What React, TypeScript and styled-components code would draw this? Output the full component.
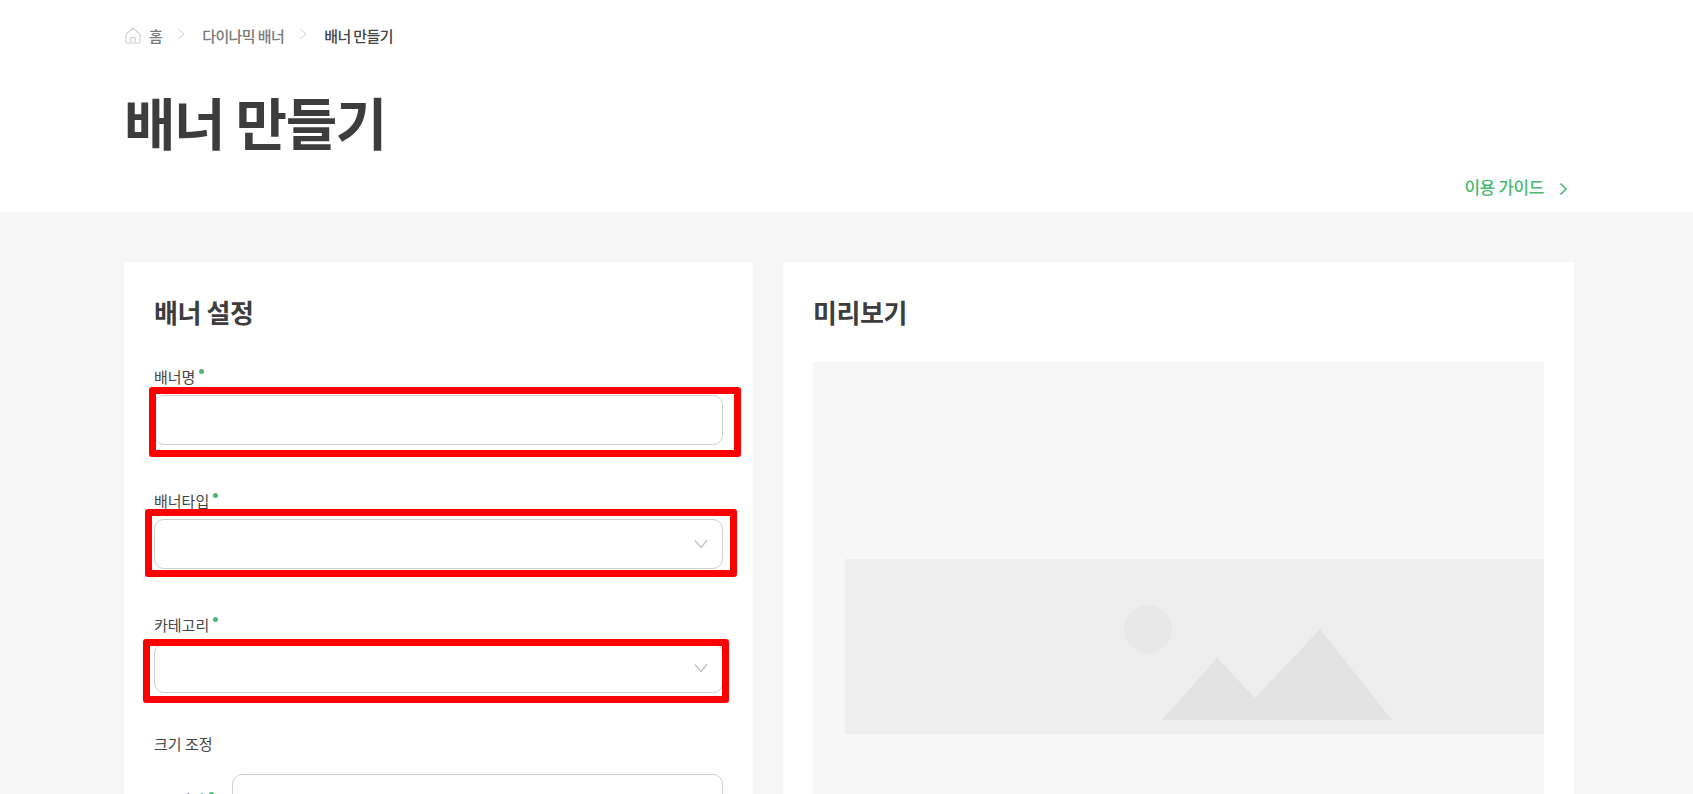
import React, { FC } from "react";
import styled, { createGlobalStyle } from "styled-components";

const colors = {
  page: "#f6f6f6",
  title: "#3d3d3d",
  text: "#444444",
  muted: "#7a7a7a",
  line: "#d2d2d2",
  inputLine: "#cfcfcf",
  green: "#4ab873",
  chevron: "#c0c0c0",
  red: "#ff0000"
};

const GlobalStyle = createGlobalStyle`
  html, body {
    margin: 0;
    padding: 0;
    background: ${colors.page};
    font-family: "Noto Sans CJK KR", "Noto Sans", sans-serif;
  }
  * {
    box-sizing: border-box;
  }
`;

const Page = styled.div`
  height: 100vh;
  overflow: hidden;
  background: ${colors.page};
`;

const Header = styled.header`
  height: 212px;
  padding: 23px 125px 0;
  background: #fff;
`;

const Breadcrumb = styled.nav`
  display: flex;
  align-items: center;
  height: 24px;
  font-size: 15px;
  font-weight: 500;
  letter-spacing: -0.6px;
  color: ${colors.muted};
`;

const Crumb = styled.span<{ $active?: boolean }>`
  color: ${p => (p.$active ? colors.text : colors.muted)};
`;

const CrumbSeparator = styled.svg`
  width: 8px;
  height: 12px;
  margin: -2px 17px 0 15px;
`;

const HomeIcon = styled.svg`
  width: 16px;
  height: 17px;
  margin-right: 8px;
`;

const Title = styled.h1`
  margin: 39px 0 0 -1px;
  font-size: 56px;
  line-height: 70px;
  font-weight: 700;
  letter-spacing: -1.4px;
  color: ${colors.title};
`;

const GuideRow = styled.div`
  display: flex;
  justify-content: flex-end;
  align-items: center;
  margin-top: 18px;
`;

const GuideLink = styled.a`
  display: flex;
  align-items: center;
  font-size: 17px;
  font-weight: 500;
  letter-spacing: -0.4px;
  line-height: 26px;
  color: ${colors.green};
`;

const GuideChevron = styled.svg`
  width: 9px;
  height: 14px;
  margin: 4px 0 0 15px;
`;

const Columns = styled.main`
  display: grid;
  grid-template-columns: 629px 791px;
  gap: 30px;
  padding: 50px 119px 0 124px;
`;

const Card = styled.section`
  padding: 31px 30px 40px;
  background: #fff;
`;

const CardTitle = styled.h2`
  margin: 0 0 35px;
  font-size: 26px;
  line-height: 38px;
  font-weight: 700;
  letter-spacing: -0.4px;
  color: ${colors.title};
`;

const Field = styled.div`
  position: relative;
  margin-bottom: 45px;
`;

const Label = styled.label`
  display: block;
  margin-bottom: 7px;
  font-size: 15px;
  font-weight: 400;
  line-height: 22px;
  color: ${colors.text};
`;

const Required = styled.span`
  display: inline-block;
  width: 5px;
  height: 5px;
  margin-left: 4px;
  border-radius: 50%;
  background: ${colors.green};
  vertical-align: 9px;
`;

const TextInput = styled.input`
  display: block;
  width: 100%;
  height: 50px;
  padding: 0 16px;
  border: 1px solid ${colors.inputLine};
  border-radius: 10px;
  background: #fff;
  outline: none;
`;

const SelectBox = styled.div`
  display: flex;
  align-items: center;
  justify-content: flex-end;
  width: 100%;
  height: 50px;
  padding-right: 14px;
  border: 1px solid ${colors.inputLine};
  border-radius: 10px;
  background: #fff;
`;

const SelectChevron = styled.svg`
  width: 14px;
  height: 10px;
`;

// red annotation frames drawn over the inputs in the screenshot
const Highlight = styled.div<{ $left: number; $top: number; $width: number; $height: number }>`
  position: absolute;
  left: ${p => p.$left}px;
  top: ${p => p.$top}px;
  width: ${p => p.$width}px;
  height: ${p => p.$height}px;
  border: 7px solid ${colors.red};
  border-radius: 3px;
  pointer-events: none;
`;

const SectionLabel = styled(Label)`
  margin-top: -5px;
  margin-bottom: 19px;
`;

const SizeRow = styled.div`
  display: flex;
  align-items: center;
`;

const SizeLabel = styled.label`
  flex: 0 0 78px;
  padding-left: 23px;
  padding-top: 1px;
  font-size: 15px;
  line-height: 22px;
  color: ${colors.text};
`;

const Preview = styled.div`
  height: 600px;
  margin-top: -4px;
  padding: 197px 0 0 32px;
  overflow: hidden;
  background: #f7f7f7;
`;

const PreviewBanner = styled.div`
  display: flex;
  justify-content: center;
  align-items: flex-start;
  width: 825px;
  height: 175px;
  padding-top: 46px;
  background: #eeeeee;
`;

const PlaceholderArt = styled.svg`
  width: 268px;
  height: 115px;
`;

const Chevron: FC = () => (
  <CrumbSeparator viewBox="0 0 8 12">
    <path d="M1 1l6 5-6 5" fill="none" stroke={colors.line} strokeWidth="1" />
  </CrumbSeparator>
);

const Select: FC = () => (
  <SelectBox>
    <SelectChevron viewBox="0 0 14 10">
      <path d="M1 1.5l6 7 6-7" fill="none" stroke={colors.chevron} strokeWidth="1.2" />
    </SelectChevron>
  </SelectBox>
);

const App: FC = () => {
  return (
    <Page>
      <GlobalStyle />
      <Header>
        <Breadcrumb>
          <HomeIcon viewBox="0 0 16 17">
            <path
              d="M1 7.2 8 1.2l7 6V15a1 1 0 0 1-1 1H2a1 1 0 0 1-1-1V7.2Z M5.8 16v-5.5h4.4V16"
              fill="none"
              stroke={colors.line}
              strokeWidth="1.2"
            />
          </HomeIcon>
          <Crumb>홈</Crumb>
          <Chevron />
          <Crumb>다이나믹 배너</Crumb>
          <Chevron />
          <Crumb $active>배너 만들기</Crumb>
        </Breadcrumb>
        <Title>배너 만들기</Title>
        <GuideRow>
          <GuideLink>
            이용 가이드
            <GuideChevron viewBox="0 0 9 14">
              <path d="M1.5 1.5 7 7l-5.5 5.5" fill="none" stroke={colors.green} strokeWidth="1.6" />
            </GuideChevron>
          </GuideLink>
        </GuideRow>
      </Header>
      <Columns>
        <Card>
          <CardTitle>배너 설정</CardTitle>
          <Field>
            <Label>
              배너명<Required />
            </Label>
            <TextInput />
            <Highlight $left={-5} $top={21} $width={592} $height={70} />
          </Field>
          <Field>
            <Label>
              배너타입<Required />
            </Label>
            <Select />
            <Highlight $left={-9} $top={19} $width={592} $height={68} />
          </Field>
          <Field>
            <Label>
              카테고리<Required />
            </Label>
            <Select />
            <Highlight $left={-11} $top={25} $width={586} $height={64} />
          </Field>
          <SectionLabel>크기 조정</SectionLabel>
          <SizeRow>
            <SizeLabel>
              너비<Required />
            </SizeLabel>
            <TextInput />
          </SizeRow>
        </Card>
        <Card>
          <CardTitle>미리보기</CardTitle>
          <Preview>
            <PreviewBanner>
              <PlaceholderArt viewBox="0 0 268 115">
                <circle cx="24" cy="24" r="24" fill="#e8e8e8" />
                <path d="M38 115 93 53l38 40 65-69 72 91Z" fill="#e3e3e3" />
              </PlaceholderArt>
            </PreviewBanner>
          </Preview>
        </Card>
      </Columns>
    </Page>
  );
};

export default App;
